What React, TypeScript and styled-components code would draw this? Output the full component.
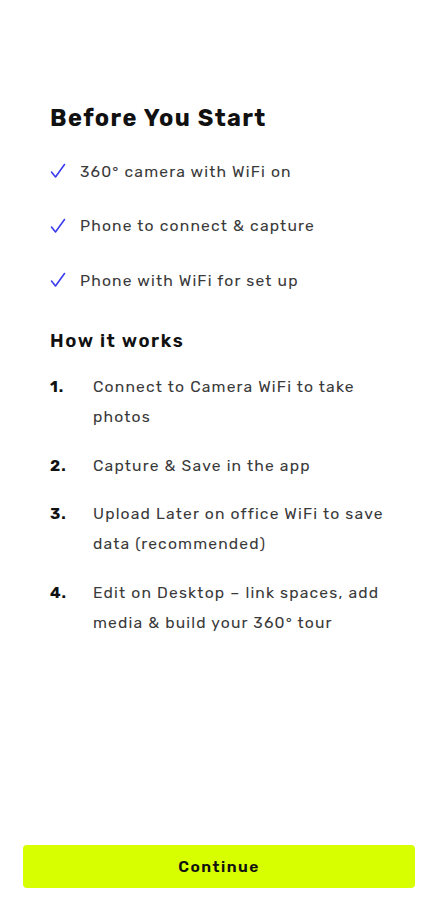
import React from "react";
import styled, { createGlobalStyle } from "styled-components";

const Global = createGlobalStyle`
  html, body { margin: 0; padding: 0; background: #fff; }
  body { font-family: Rubik, Inter, "Noto Sans", sans-serif; }
`;

const Page = styled.div`
  width: 438px;
  height: 900px;
  box-sizing: border-box;
  display: flex;
  flex-direction: column;
  padding: 103px 23px 12px 23px;
`;

const Content = styled.div`
  flex: 1;
  padding: 0 27px;
`;

const Title = styled.h1`
  margin: 0 0 27px 0;
  font-size: 23.5px;
  line-height: 30px;
  font-weight: 700;
  color: #111;
  letter-spacing: 1.4px;
`;

const CheckList = styled.ul`
  list-style: none;
  margin: 0;
  padding: 0;
  display: flex;
  flex-direction: column;
  gap: 32.5px;
`;

const CheckItem = styled.li`
  display: flex;
  align-items: center;
  height: 22px;
  font-size: 15.7px;
  letter-spacing: 1.15px;
  color: #3a3a3a;
`;

const CheckMark = styled.svg`
  width: 16px;
  height: 16px;
  margin-right: 14px;
  flex: none;
`;

const SubTitle = styled.h2`
  margin: 38px 0 19px 0;
  font-size: 18.5px;
  line-height: 24px;
  font-weight: 600;
  letter-spacing: 1.6px;
  color: #111;
`;

const Steps = styled.ol`
  list-style: none;
  margin: 0;
  padding: 0;
  display: flex;
  flex-direction: column;
  gap: 18.5px;
`;

const Step = styled.li`
  display: flex;
  font-size: 15.7px;
  line-height: 30px;
  letter-spacing: 1.15px;
  color: #3a3a3a;
`;

const StepNum = styled.span`
  width: 43px;
  flex: none;
  font-weight: 700;
  letter-spacing: 1px;
  color: #111;
`;

const Button = styled.button`
  width: 100%;
  height: 43px;
  border: none;
  border-radius: 4px;
  background: #d8ff00;
  color: #111;
  font-family: inherit;
  font-size: 15.5px;
  font-weight: 600;
  letter-spacing: 1.5px;
  cursor: pointer;
`;

const checks = [
  "360° camera with WiFi on",
  "Phone to connect & capture",
  "Phone with WiFi for set up",
];

const steps = [
  "Connect to Camera WiFi to take photos",
  "Capture & Save in the app",
  "Upload Later on office WiFi to save data (recommended)",
  "Edit on Desktop – link spaces, add media & build your 360° tour",
];

export default function App() {
  return (
    <>
      <Global />
      <Page>
        <Content>
          <Title>Before You Start</Title>
          <CheckList>
            {checks.map((c) => (
              <CheckItem key={c}>
                <CheckMark viewBox="0 0 16 16">
                  <path d="M1.5 9 L5.5 14 L14.5 1.5" fill="none" stroke="#3b3bf0" strokeWidth="1.6" strokeLinecap="round" strokeLinejoin="round" />
                </CheckMark>
                {c}
              </CheckItem>
            ))}
          </CheckList>
          <SubTitle>How it works</SubTitle>
          <Steps>
            {steps.map((s, i) => (
              <Step key={s}>
                <StepNum>{i + 1}.</StepNum>
                <span>{s}</span>
              </Step>
            ))}
          </Steps>
        </Content>
        <Button>Continue</Button>
      </Page>
    </>
  );
}
